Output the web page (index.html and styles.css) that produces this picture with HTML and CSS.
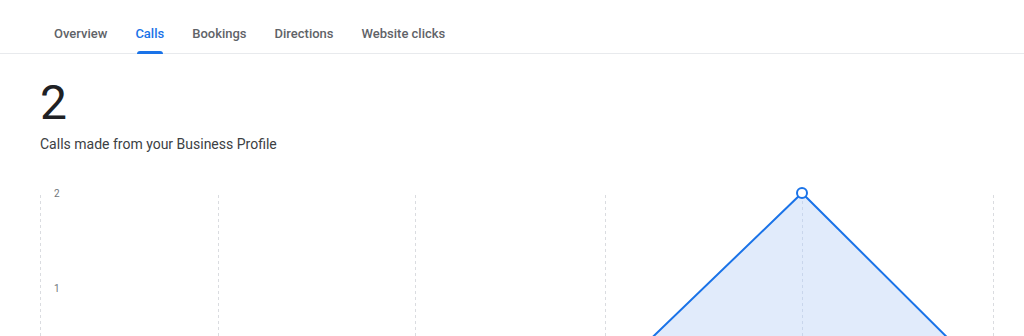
FILE: index.html
```html
<!DOCTYPE html>
<html lang="en">
<head>
<meta charset="utf-8">
<title>Calls</title>
<link rel="stylesheet" href="styles.css">
</head>
<body>
<nav class="tabs">
  <a class="tab">Overview</a>
  <a class="tab active"><span class="label">Calls</span></a>
  <a class="tab">Bookings</a>
  <a class="tab">Directions</a>
  <a class="tab">Website clicks</a>
</nav>
<main class="content">
  <div class="metric">2</div>
  <div class="caption">Calls made from your Business Profile</div>
  <div class="chart">
    <svg class="chart-svg" width="1024" height="150" viewBox="0 0 1024 150" xmlns="http://www.w3.org/2000/svg">
      <g stroke="#dadce0" stroke-width="1" stroke-dasharray="3 3">
        <line x1="40.5" y1="8" x2="40.5" y2="150"/>
        <line x1="218.5" y1="8" x2="218.5" y2="150"/>
        <line x1="415.5" y1="8" x2="415.5" y2="150"/>
        <line x1="605.5" y1="8" x2="605.5" y2="150"/>
        <line x1="993.5" y1="8" x2="993.5" y2="150"/>
      </g>
      <polygon points="605,196 802,6 993,196" fill="#e1ebfb"/>
      <line x1="802.5" y1="8" x2="802.5" y2="150" stroke="#c9d6ec" stroke-width="1" stroke-dasharray="3 3"/>
      <polyline points="605,196 802,6 993,196" fill="none" stroke="#1a73e8" stroke-width="2"/>
      <circle cx="802" cy="6" r="5" fill="#ffffff" stroke="#1a73e8" stroke-width="2"/>
      <text x="54" y="10" class="axis">2</text>
      <text x="54" y="105" class="axis">1</text>
    </svg>
  </div>
</main>
</body>
</html>
```

FILE: styles.css
```css
html, body {
  margin: 0;
  padding: 0;
  background: #ffffff;
  font-family: Roboto, "Liberation Sans", Arial, sans-serif;
  overflow: hidden;
}

.tabs {
  display: flex;
  padding: 0 0 0 40px;
  height: 54px;
  border-bottom: 1px solid #e8eaed;
  box-sizing: border-box;
}

.tab {
  display: flex;
  align-items: center;
  padding: 14px 14px 0;
  font-size: 13px;
  font-weight: 500;
  color: #5f6368;
  letter-spacing: 0;
  position: relative;
}

.tab.active {
  color: #1a73e8;
}

.tab.active .label {
  position: relative;
  display: block;
}

.tab.active .label::after {
  content: "";
  position: absolute;
  left: 2px;
  right: 1px;
  top: 25px;
  height: 3px;
  border-radius: 3px 3px 0 0;
  background: #1a73e8;
}

.content {
  padding: 21px 0 0 0;
}

.metric {
  padding-left: 40px;
  font-size: 48px;
  line-height: 56px;
  font-weight: 400;
  color: #202124;
}

.caption {
  padding-left: 40px;
  margin-top: 3px;
  font-size: 14px;
  line-height: 20px;
  color: #3c4043;
}

.chart {
  margin-top: 33px;
  height: 150px;
}

.chart-svg {
  display: block;
}

.axis {
  font-family: Roboto, "Liberation Sans", Arial, sans-serif;
  font-size: 10px;
  fill: #70757a;
}
```
